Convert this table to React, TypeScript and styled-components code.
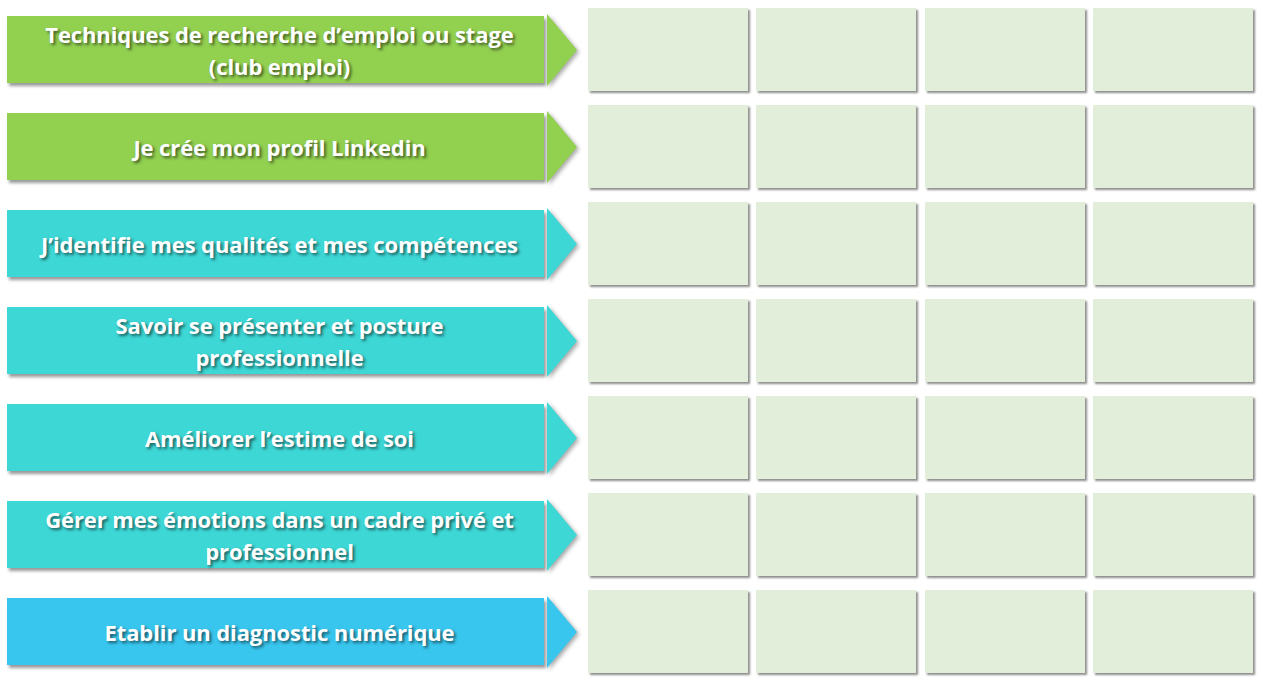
import styled, { createGlobalStyle } from 'styled-components';

const GlobalStyle = createGlobalStyle`
  html, body {
    margin: 0;
    padding: 0;
    background: #ffffff;
  }
`;

type Tone = 'green' | 'teal' | 'blue';

const toneColors: Record<Tone, string> = {
  green: '#92d050',
  teal: '#3dd7d5',
  blue: '#38c6ee',
};

const steps: { label: string[]; tone: Tone }[] = [
  { label: ['Techniques de recherche d’emploi ou stage', '(club emploi)'], tone: 'green' },
  { label: ['Je crée mon profil Linkedin'], tone: 'green' },
  { label: ['J’identifie mes qualités et mes compétences'], tone: 'teal' },
  { label: ['Savoir se présenter et posture', 'professionnelle'], tone: 'teal' },
  { label: ['Améliorer l’estime de soi'], tone: 'teal' },
  { label: ['Gérer mes émotions dans un cadre privé et', 'professionnel'], tone: 'teal' },
  { label: ['Etablir un diagnostic numérique'], tone: 'blue' },
];

const Page = styled.div`
  display: flex;
  flex-direction: column;
  gap: 14px;
  width: 1263px;
  height: 685px;
  padding: 8px 0 0 7px;
  box-sizing: border-box;
`;

const Row = styled.div`
  display: flex;
  align-items: center;
  height: 83px;
`;

const Banner = styled.div<{ $tone: Tone }>`
  display: flex;
  flex-direction: column;
  align-items: center;
  justify-content: center;
  width: 537px;
  height: 67px;
  background: ${(p) => toneColors[p.$tone]};
  box-shadow: 2px 3px 3px rgba(0, 0, 0, 0.4);
  color: #ffffff;
  font-family: 'Open Sans', Lato, sans-serif;
  font-weight: 700;
  font-size: 22px;
  letter-spacing: -0.1px;
  line-height: 32px;
  text-align: center;
  text-shadow: 2px 2px 3px rgba(0, 0, 0, 0.55);
  padding-left: 8px;
  box-sizing: border-box;
  white-space: nowrap;
`;

const Arrow = styled.svg`
  width: 30px;
  height: 72px;
  margin-left: 3px;
  flex: none;
  overflow: visible;
  filter: drop-shadow(2px 2px 2px rgba(0, 0, 0, 0.35));
`;

const Boxes = styled.div`
  display: flex;
  gap: 8.4px;
  margin-left: 11px;
`;

const Box = styled.div`
  width: 160px;
  height: 83px;
  background: #e2eed9;
  box-shadow: 2px 2px 2px rgba(0, 0, 0, 0.45);
`;

export default function App() {
  return (
    <>
      <GlobalStyle />
      <Page>
        {steps.map((step, i) => (
          <Row key={i}>
            <Banner $tone={step.tone}>
              {step.label.map((line) => (
                <span key={line}>{line}</span>
              ))}
            </Banner>
            <Arrow viewBox="0 0 30 72">
              <polygon points="0,0 30,36 0,72" fill={toneColors[step.tone]} />
            </Arrow>
            <Boxes>
              <Box />
              <Box />
              <Box />
              <Box />
            </Boxes>
          </Row>
        ))}
      </Page>
    </>
  );
}
